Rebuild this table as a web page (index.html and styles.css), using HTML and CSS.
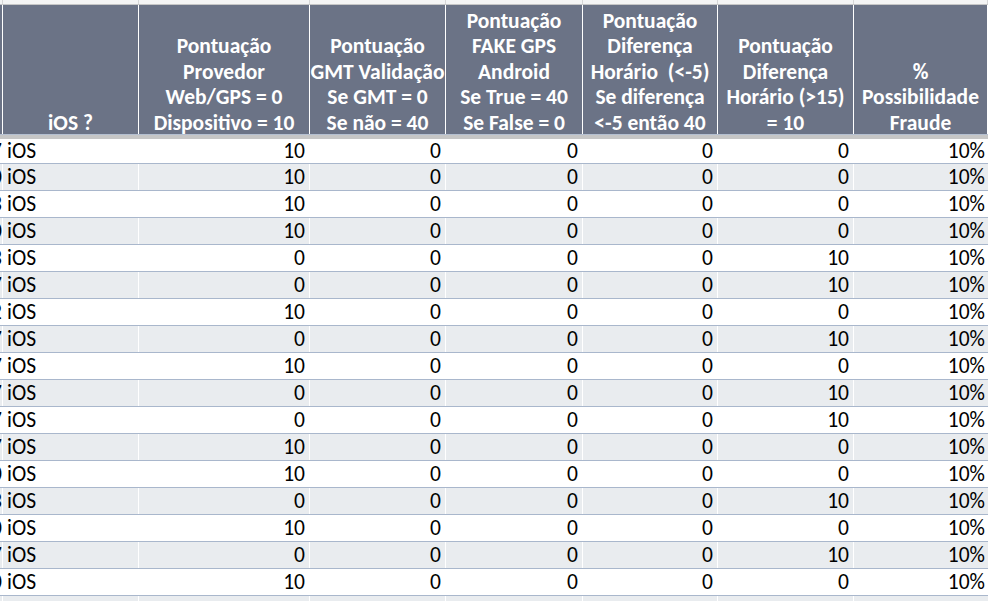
FILE: index.html
```html
<!DOCTYPE html>
<html lang="pt">
<head>
<meta charset="utf-8">
<title>Pontuação Fraude</title>
<link rel="stylesheet" href="styles.css">
</head>
<body>
<div class="sheet">
  <div class="row top">
    <div class="c"></div><div class="c"></div><div class="c"></div><div class="c"></div><div class="c"></div><div class="c"></div><div class="c"></div><div class="c"></div>
  </div>
  <div class="row head">
    <div class="h"></div>
    <div class="h"><div class="lines">iOS ?</div></div>
    <div class="h"><div class="lines">Pontuação<br>Provedor<br>Web/GPS = 0<br>Dispositivo = 10</div></div>
    <div class="h"><div class="lines">Pontuação<br>GMT Validação<br>Se GMT = 0<br>Se não = 40</div></div>
    <div class="h"><div class="lines">Pontuação<br>FAKE GPS<br>Android<br>Se True = 40<br>Se False = 0</div></div>
    <div class="h"><div class="lines">Pontuação<br>Diferença<br>Horário&nbsp; (&lt;-5)<br>Se diferença<br>&lt;-5 então 40</div></div>
    <div class="h"><div class="lines">Pontuação<br>Diferença<br>Horário (&gt;15)<br>= 10</div></div>
    <div class="h"><div class="lines">%<br>Possibilidade<br>Fraude</div></div>
  </div>
  <div class="band"></div>
  <div class="rows" id="rows">
    <div class="row d first"><div class="cut"><span>7</span></div><div class="t">iOS</div><div class="n">10</div><div class="n">0</div><div class="n">0</div><div class="n">0</div><div class="n">0</div><div class="n last">10%</div></div>
    <div class="row d"><div class="cut"><span>0</span></div><div class="t">iOS</div><div class="n">10</div><div class="n">0</div><div class="n">0</div><div class="n">0</div><div class="n">0</div><div class="n last">10%</div></div>
    <div class="row d"><div class="cut"><span>3</span></div><div class="t">iOS</div><div class="n">10</div><div class="n">0</div><div class="n">0</div><div class="n">0</div><div class="n">0</div><div class="n last">10%</div></div>
    <div class="row d"><div class="cut"><span>0</span></div><div class="t">iOS</div><div class="n">10</div><div class="n">0</div><div class="n">0</div><div class="n">0</div><div class="n">0</div><div class="n last">10%</div></div>
    <div class="row d"><div class="cut"><span>3</span></div><div class="t">iOS</div><div class="n">0</div><div class="n">0</div><div class="n">0</div><div class="n">0</div><div class="n">10</div><div class="n last">10%</div></div>
    <div class="row d"><div class="cut"><span>7</span></div><div class="t">iOS</div><div class="n">0</div><div class="n">0</div><div class="n">0</div><div class="n">0</div><div class="n">10</div><div class="n last">10%</div></div>
    <div class="row d"><div class="cut"><span>2</span></div><div class="t">iOS</div><div class="n">10</div><div class="n">0</div><div class="n">0</div><div class="n">0</div><div class="n">0</div><div class="n last">10%</div></div>
    <div class="row d"><div class="cut"><span>7</span></div><div class="t">iOS</div><div class="n">0</div><div class="n">0</div><div class="n">0</div><div class="n">0</div><div class="n">10</div><div class="n last">10%</div></div>
    <div class="row d"><div class="cut"><span>7</span></div><div class="t">iOS</div><div class="n">10</div><div class="n">0</div><div class="n">0</div><div class="n">0</div><div class="n">0</div><div class="n last">10%</div></div>
    <div class="row d"><div class="cut"><span>7</span></div><div class="t">iOS</div><div class="n">0</div><div class="n">0</div><div class="n">0</div><div class="n">0</div><div class="n">10</div><div class="n last">10%</div></div>
    <div class="row d"><div class="cut"><span>7</span></div><div class="t">iOS</div><div class="n">0</div><div class="n">0</div><div class="n">0</div><div class="n">0</div><div class="n">10</div><div class="n last">10%</div></div>
    <div class="row d"><div class="cut"><span>7</span></div><div class="t">iOS</div><div class="n">10</div><div class="n">0</div><div class="n">0</div><div class="n">0</div><div class="n">0</div><div class="n last">10%</div></div>
    <div class="row d"><div class="cut"><span>0</span></div><div class="t">iOS</div><div class="n">10</div><div class="n">0</div><div class="n">0</div><div class="n">0</div><div class="n">0</div><div class="n last">10%</div></div>
    <div class="row d"><div class="cut"><span>3</span></div><div class="t">iOS</div><div class="n">0</div><div class="n">0</div><div class="n">0</div><div class="n">0</div><div class="n">10</div><div class="n last">10%</div></div>
    <div class="row d"><div class="cut"><span>0</span></div><div class="t">iOS</div><div class="n">10</div><div class="n">0</div><div class="n">0</div><div class="n">0</div><div class="n">0</div><div class="n last">10%</div></div>
    <div class="row d"><div class="cut"><span>7</span></div><div class="t">iOS</div><div class="n">0</div><div class="n">0</div><div class="n">0</div><div class="n">0</div><div class="n">10</div><div class="n last">10%</div></div>
    <div class="row d"><div class="cut"><span>0</span></div><div class="t">iOS</div><div class="n">10</div><div class="n">0</div><div class="n">0</div><div class="n">0</div><div class="n">0</div><div class="n last">10%</div></div>
    <div class="row d"><div class="cut"></div><div class="t"></div><div class="n"></div><div class="n"></div><div class="n"></div><div class="n"></div><div class="n"></div><div class="n last"></div></div>
  </div>
</div>
</body>
</html>
```
FILE: styles.css
```css
html, body {
  margin: 0;
  padding: 0;
  background: #ffffff;
}

body {
  overflow: hidden;
  font-family: Carlito, Lato, "Open Sans", sans-serif;
}

.sheet {
  width: 988px;
  height: 601px;
  overflow: hidden;
}

.row {
  display: grid;
  grid-template-columns: 3px 136px 171px 136px 137px 135px 136px 1fr;
}

.top {
  height: 5px;
  box-sizing: border-box;
  border-bottom: 1px solid #c6c6c6;
  background: #f4f4f4;
}

.top .c {
  border-right: 1px solid #d6d6d6;
}

.head {
  height: 129px;
  background: #6b7386;
}

.h {
  box-sizing: border-box;
  border-right: 1px solid #ffffff;
  color: #ffffff;
  font-weight: 700;
  font-size: 21.5px;
  line-height: 25.5px;
  text-align: center;
  white-space: nowrap;
  overflow: hidden;
  display: flex;
  flex-direction: column;
  justify-content: flex-end;
}

.lines {
  margin-bottom: -2px;
}

.band {
  height: 5px;
  background: #c6c6c6;
  border-top: 1px solid #b4bfd0;
  box-sizing: border-box;
}

.d {
  height: 27px;
  box-sizing: border-box;
  border-bottom: 1px solid #a9b7cc;
  font-size: 21.5px;
  line-height: 26px;
  color: #000000;
}

.d.first {
  height: 25px;
  line-height: 24px;
}

.d:nth-child(even) {
  background: #e9ecef;
}

.d > div {
  border-right: 1px solid #ffffff;
  white-space: nowrap;
  overflow: hidden;
}

.cut {
  display: flex;
  justify-content: flex-end;
}

.cut span {
  flex-shrink: 0;
}

.t {
  padding-left: 4px;
}

.n {
  text-align: right;
  padding-right: 4px;
}

.n.last {
  padding-right: 3px;
  border-right: none;
}
```
